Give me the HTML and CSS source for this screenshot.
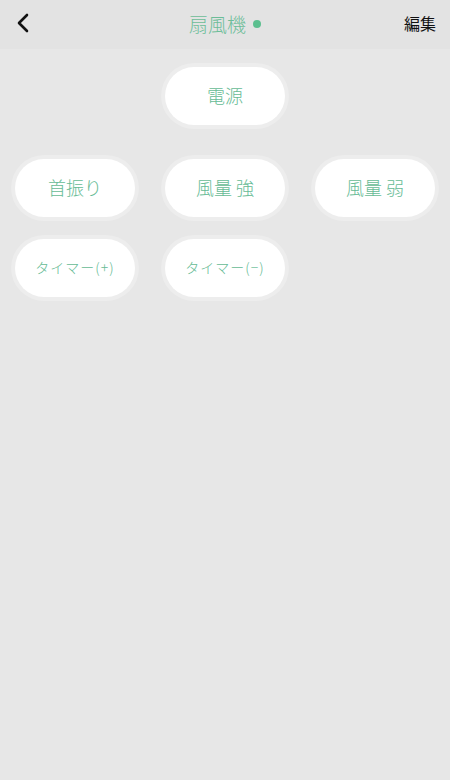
FILE: index.html
```html
<!DOCTYPE html>
<html lang="ja">
<head>
  <meta charset="UTF-8">
  <title>扇風機</title>
  <link rel="stylesheet" href="styles.css">
</head>
<body>
  <!-- ヘッダー -->
  <div class="header">
    <div class="back">
      <svg width="14" height="20" viewBox="0 0 14 20">
        <path d="M11 2 L3 10 L11 18" fill="none" stroke="#111" stroke-width="2.6" stroke-linecap="round" stroke-linejoin="round"/>
      </svg>
    </div>
    <div class="title">扇風機<span class="dot"></span></div>
    <div class="edit">編集</div>
  </div>

  <!-- リモコンボタン -->
  <div class="remote">
    <div class="row row-power">
      <button class="btn">電源</button>
    </div>
    <div class="row row-main">
      <button class="btn">首振り</button>
      <button class="btn">風量 強</button>
      <button class="btn">風量 弱</button>
    </div>
    <div class="row row-timer">
      <button class="btn small">タイマー(+)</button>
      <button class="btn small">タイマー(−)</button>
    </div>
  </div>
</body>
</html>
```

FILE: styles.css
```css
/* ページ全体 */
body {
  margin: 0;
  height: 780px;
  background-color: #e7e7e7;
  font-family: "Noto Sans CJK JP", "Noto Sans", sans-serif;
}

/* ヘッダー */
.header {
  height: 46px;
  display: flex;
  align-items: center;
  justify-content: space-between;
  padding: 0 14px 3px 16px;
  background-color: #e3e3e3;
  position: relative;
}

.back {
  display: flex;
  align-items: center;
  width: 40px;
}

.title {
  position: absolute;
  left: 0;
  right: 0;
  text-align: center;
  font-size: 19px;
  font-weight: 300;
  color: #6cbd98;
  pointer-events: none;
}

.dot {
  display: inline-block;
  width: 8px;
  height: 8px;
  border-radius: 50%;
  background-color: #5cbf8f;
  margin-left: 7px;
  vertical-align: middle;
  position: relative;
  top: -2px;
}

.edit {
  font-size: 16px;
  color: #111;
}

/* ボタン配置 */
.remote {
  padding: 18px 15px 0 15px;
}

.row {
  display: flex;
  gap: 30px;
}

.row-power {
  justify-content: center;
}

.row-main {
  margin-top: 34px;
}

.row-timer {
  margin-top: 22px;
}

/* ボタン */
.btn {
  width: 120px;
  height: 58px;
  border: none;
  border-radius: 29px;
  background-color: #fff;
  color: #66bb95;
  font-family: inherit;
  font-size: 18px;
  font-weight: 300;
  box-shadow: 0 0 0 4px rgba(255, 255, 255, 0.25);
  cursor: pointer;
  padding: 0 0 2px 0;
}

.btn.small {
  font-size: 14px;
  letter-spacing: 1px;
}
```
